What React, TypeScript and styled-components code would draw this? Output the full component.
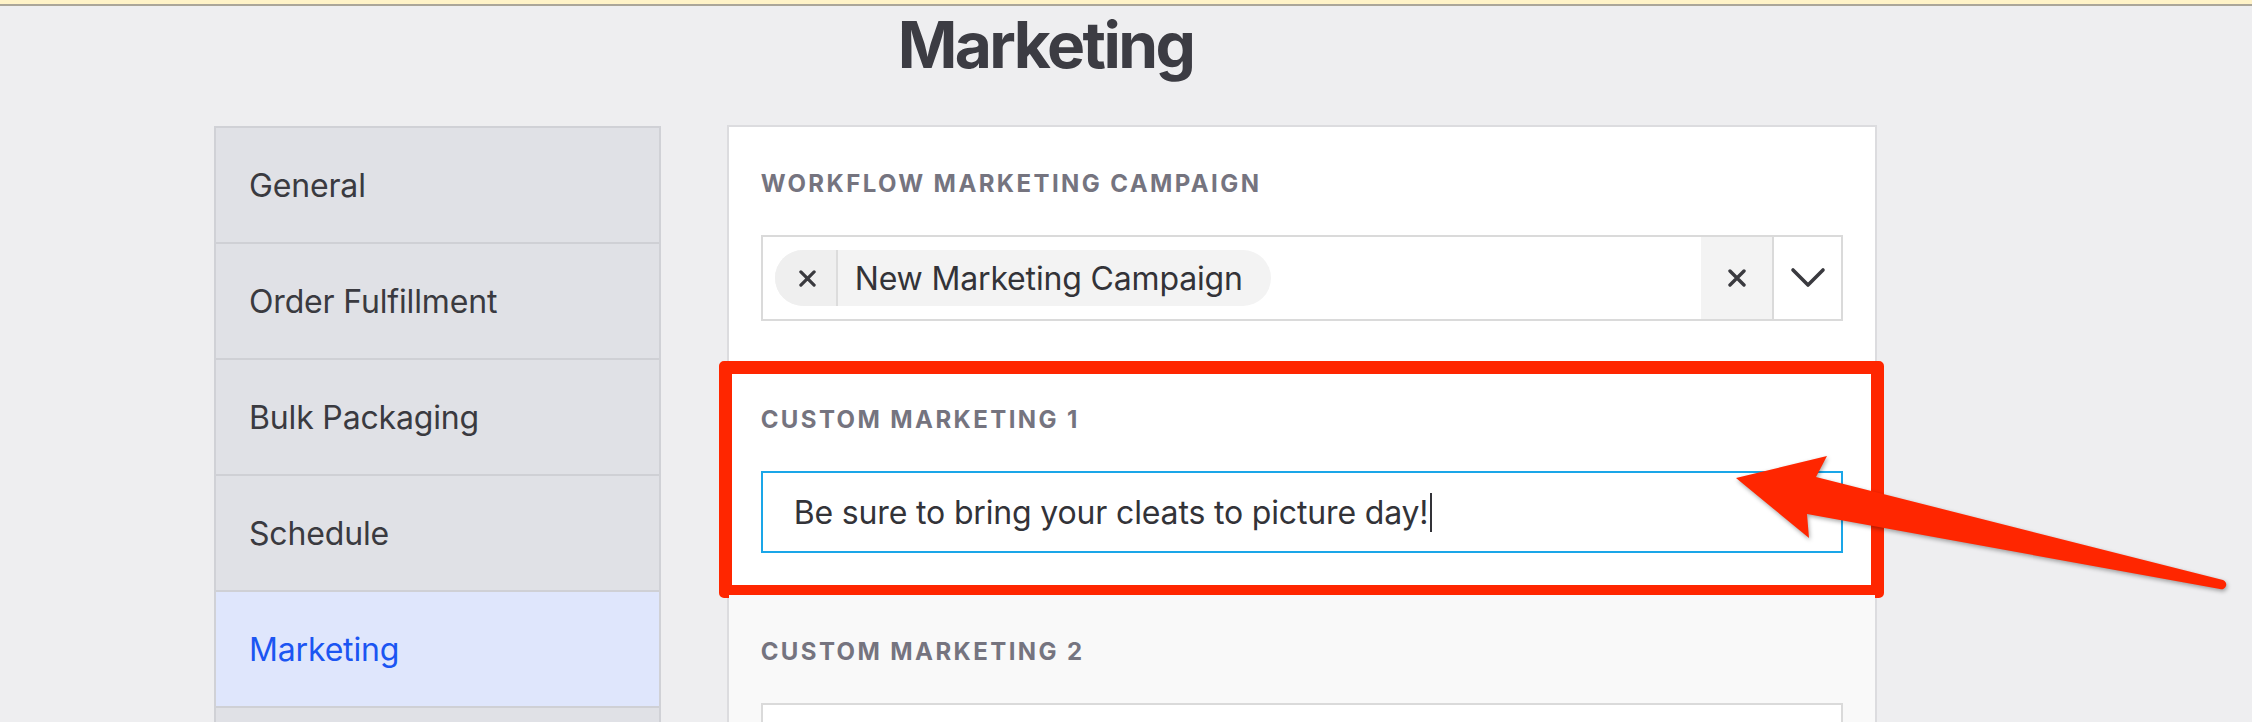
import React from "react";
import styled, { createGlobalStyle } from "styled-components";

const GlobalStyle = createGlobalStyle`
  * { box-sizing: border-box; }
  html, body { margin: 0; padding: 0; }
  body {
    background: #eeeef0;
    font-family: Inter, "Noto Sans", "Liberation Sans", sans-serif;
    color: #3a3a40;
    -webkit-font-smoothing: antialiased;
  }
`;

const Page = styled.div`
  position: relative;
  min-height: 722px;
  overflow: hidden;
`;

const TopBar = styled.div`
  height: 6px;
  background: #fff3c8;
  border-bottom: 2px solid #aba699;
`;

const Container = styled.div`
  width: 1663px;
  margin-left: 214px;
`;

const Title = styled.h1`
  margin: 1px 0 42px;
  text-align: center;
  font-size: 64px;
  line-height: 76px;
  font-weight: 700;
  letter-spacing: -0.04em;
  color: #3c3c43;
`;

const Body = styled.div`
  display: flex;
  align-items: flex-start;
  gap: 66px;
`;

const Sidebar = styled.nav`
  width: 447px;
  margin-top: 1px;
  border: 2px solid #d0d1d6;
  border-bottom: none;
  background: #e0e1e6;
`;

const NavItem = styled.div<{ $active?: boolean }>`
  height: 116px;
  display: flex;
  align-items: center;
  padding-left: 33px;
  border-bottom: 2px solid #cfd0d5;
  background: ${(p) => (p.$active ? "#dfe6fc" : "#e0e1e6")};
  color: ${(p) => (p.$active ? "#1b55f2" : "#3a3a40")};
  font-size: 32px;
  letter-spacing: -0.005em;
`;

const Panel = styled.section`
  width: 1151px;
  border: 2px solid #dcdcdf;
  border-bottom: none;
  background: #ffffff;
`;

const Section = styled.div<{ $muted?: boolean }>`
  position: relative;
  display: flex;
  flex-direction: column;
  gap: 36px;
  padding: 42px 32px;
  background: ${(p) => (p.$muted ? "#f9f9f9" : "#ffffff")};
`;

const Label = styled.div`
  font-size: 24px;
  line-height: 30px;
  font-weight: 700;
  letter-spacing: 0.1em;
  text-transform: uppercase;
  color: #75747f;
`;

const Select = styled.div`
  display: flex;
  align-items: stretch;
  height: 86px;
  border: 2px solid #dadada;
  background: #ffffff;
`;

const ValueArea = styled.div`
  flex: 1;
  display: flex;
  align-items: center;
  padding-left: 12px;
`;

const Chip = styled.div`
  display: flex;
  align-items: stretch;
  height: 56px;
  border-radius: 28px;
  overflow: hidden;
  background: #f3f3f3;
`;

const ChipRemove = styled.span`
  width: 63px;
  display: flex;
  align-items: center;
  justify-content: center;
  padding-left: 4px;
  background: #efefef;
  border-right: 2px solid #dcdcdc;
  color: #3a3a3f;
`;

const ChipText = styled.span`
  display: flex;
  align-items: center;
  padding: 0 28px 0 17px;
  font-size: 32px;
  color: #333338;
  letter-spacing: -0.005em;
`;

const IconCell = styled.div<{ $shaded?: boolean }>`
  width: ${(p) => (p.$shaded ? "71px" : "69px")};
  display: flex;
  align-items: center;
  justify-content: center;
  background: ${(p) => (p.$shaded ? "#f3f3f3" : "#ffffff")};
  border-left: ${(p) => (p.$shaded ? "none" : "2px solid #dadada")};
  color: #3a3a3f;
`;

const Input = styled.div<{ $focused?: boolean }>`
  display: flex;
  align-items: center;
  height: 82px;
  padding-left: 31px;
  border: 2px solid ${(p) => (p.$focused ? "#1aa6e8" : "#dadada")};
  background: #ffffff;
  font-size: 32px;
  color: #333338;
  letter-spacing: -0.005em;
`;

const Caret = styled.span`
  display: inline-block;
  width: 2px;
  height: 39px;
  margin-left: 2px;
  background: #333338;
`;

const Highlight = styled.div`
  position: absolute;
  top: -2px;
  bottom: -3px;
  left: -10px;
  right: -9px;
  border: 13px solid #ff2600;
  border-radius: 5px;
  pointer-events: none;
`;

const ArrowLayer = styled.svg`
  position: absolute;
  left: 0;
  top: 0;
  width: 2252px;
  height: 722px;
  pointer-events: none;
  filter: drop-shadow(1px 2px 2px rgba(0, 0, 0, 0.35));
`;

const Cross = ({ size, weight = 3 }: { size: number; weight?: number }) => (
  <svg width={size} height={size} viewBox="0 0 18 18" fill="none">
    <path d="M2 2 L16 16 M16 2 L2 16" stroke="currentColor" strokeWidth={weight} strokeLinecap="round" />
  </svg>
);

const Chevron = () => (
  <svg width={36} height={22} viewBox="0 0 36 22" fill="none">
    <path d="M3 3 L18 18 L33 3" stroke="currentColor" strokeWidth={3.6} strokeLinecap="round" strokeLinejoin="round" />
  </svg>
);

const navItems = ["General", "Order Fulfillment", "Bulk Packaging", "Schedule", "Marketing", ""];

export default function App() {
  return (
    <>
      <GlobalStyle />
      <Page>
        <TopBar />
        <Container>
          <Title>Marketing</Title>
          <Body>
            <Sidebar>
              {navItems.map((item, i) => (
                <NavItem key={i} $active={item === "Marketing"}>
                  {item}
                </NavItem>
              ))}
            </Sidebar>
            <Panel>
              <Section>
                <Label>Workflow Marketing Campaign</Label>
                <Select>
                  <ValueArea>
                    <Chip>
                      <ChipRemove>
                        <Cross size={17} weight={3.4} />
                      </ChipRemove>
                      <ChipText>New Marketing Campaign</ChipText>
                    </Chip>
                  </ValueArea>
                  <IconCell $shaded>
                    <Cross size={18} weight={3.4} />
                  </IconCell>
                  <IconCell>
                    <Chevron />
                  </IconCell>
                </Select>
              </Section>
              <Section>
                <Label>Custom Marketing 1</Label>
                <Input $focused>
                  Be sure to bring your cleats to picture day!
                  <Caret />
                </Input>
                <Highlight />
              </Section>
              <Section $muted>
                <Label>Custom Marketing 2</Label>
                <Input />
              </Section>
            </Panel>
          </Body>
        </Container>
        <ArrowLayer viewBox="0 0 2252 722">
          <path
            d="M1736 478 L1827 456 L1816 477 L2223 580 A4.5 4.5 0 0 1 2220 589 L1807 514 L1809 538 Z"
            fill="#ff2600"
          />
        </ArrowLayer>
      </Page>
    </>
  );
}
